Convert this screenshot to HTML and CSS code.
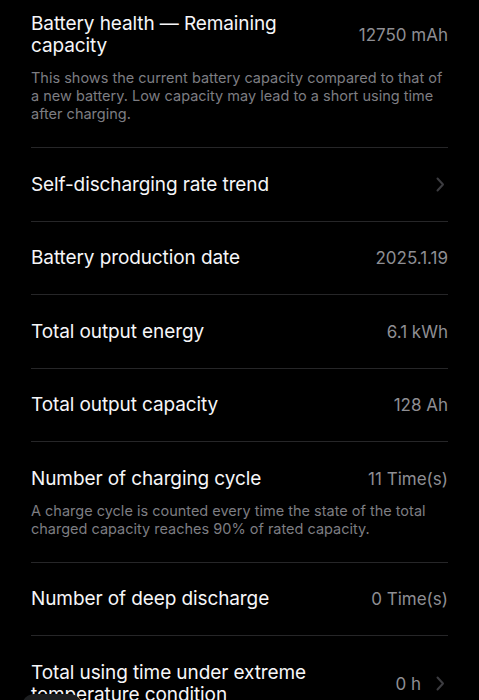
FILE: index.html
```html
<!DOCTYPE html>
<html lang="en">

<head>
  <meta charset="UTF-8">
  <meta name="viewport" content="width=device-width, initial-scale=1.0">
  <title>Battery</title>
  <link rel="stylesheet" href="styles.css">
</head>

<body>
  <div class="list">
    <div class="row">
      <div class="row-head">
        <span class="title">Battery health — Remaining capacity</span>
        <span class="value">12750 mAh</span>
      </div>
      <p class="desc">This shows the current battery capacity compared to that of a new battery. Low capacity may lead to a short using time after charging.</p>
    </div>

    <div class="row">
      <div class="row-head">
        <span class="title">Self-discharging rate trend</span>
        <span class="value">
          <svg class="chevron" width="9" height="15" viewBox="0 0 9 15"><path d="M1.5 1.5 L7 7.5 L1.5 13.5" fill="none" stroke="currentColor" stroke-width="2" stroke-linecap="round" stroke-linejoin="round"/></svg>
        </span>
      </div>
    </div>

    <div class="row">
      <div class="row-head">
        <span class="title">Battery production date</span>
        <span class="value">2025.1.19</span>
      </div>
    </div>

    <div class="row">
      <div class="row-head">
        <span class="title">Total output energy</span>
        <span class="value">6.1 kWh</span>
      </div>
    </div>

    <div class="row">
      <div class="row-head">
        <span class="title">Total output capacity</span>
        <span class="value">128 Ah</span>
      </div>
    </div>

    <div class="row">
      <div class="row-head">
        <span class="title">Number of charging cycle</span>
        <span class="value">11 Time(s)</span>
      </div>
      <p class="desc">A charge cycle is counted every time the state of the total charged capacity reaches 90% of rated capacity.</p>
    </div>

    <div class="row">
      <div class="row-head">
        <span class="title">Number of deep discharge</span>
        <span class="value">0 Time(s)</span>
      </div>
    </div>

    <div class="row">
      <div class="row-head">
        <span class="title">Total using time under extreme temperature condition</span>
        <span class="value">0 h
          <svg class="chevron" width="9" height="15" viewBox="0 0 9 15"><path d="M1.5 1.5 L7 7.5 L1.5 13.5" fill="none" stroke="currentColor" stroke-width="2" stroke-linecap="round" stroke-linejoin="round"/></svg>
        </span>
      </div>
    </div>
  </div>

  <div class="fab"></div>
</body>

</html>
```

FILE: styles.css
```css
body {
  background-color: #000;
  font-family: 'Inter', 'Liberation Sans', sans-serif;
  margin: 0;
  overflow: hidden;
  height: 700px;
  position: relative;
}

.list {
  margin-top: -12.5px;
  padding: 0 31px;
}

.row {
  padding: 25.5px 0 25px;
  border-bottom: 1px solid #262628;
}

.row:has(.desc) {
  padding-bottom: 24px;
}

.row-head {
  display: flex;
  align-items: center;
  gap: 24px;
}

.title {
  flex: 1;
  color: #f6f6f8;
  font-size: 19px;
  line-height: 22px;
  letter-spacing: -0.1px;
}

.value {
  display: flex;
  align-items: center;
  gap: 15px;
  color: #8e8e93;
  font-size: 17px;
  line-height: 22px;
  white-space: nowrap;
}

.chevron {
  color: #3c3c40;
  margin-right: 3px;
}

.desc {
  margin: 12px 0 0;
  color: #7d7d82;
  font-size: 14.5px;
  line-height: 18px;
}

.fab {
  position: absolute;
  left: 22px;
  top: 694px;
  width: 60px;
  height: 40px;
  border-radius: 12px;
  background-color: #1c1e20;
}
```
